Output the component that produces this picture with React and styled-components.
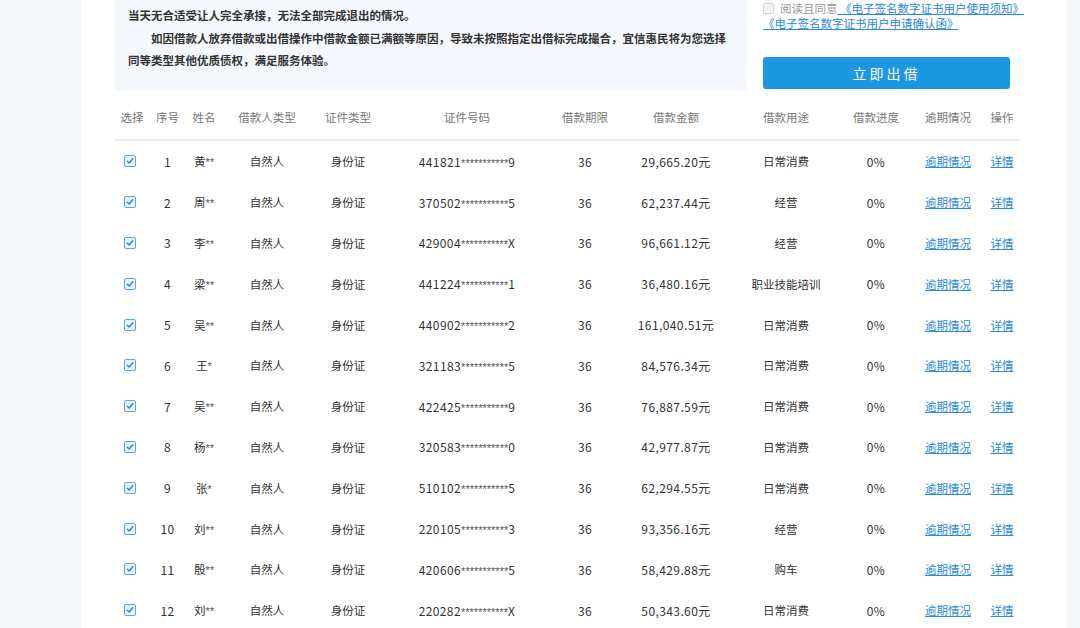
import React from "react";
import styled, { createGlobalStyle } from "styled-components";

const GlobalStyle = createGlobalStyle`
  html, body { margin: 0; padding: 0; }
  body {
    background: #f5f7fb;
    font-family: "Noto Sans CJK SC", "Microsoft YaHei", sans-serif;
    color: #333;
    overflow: hidden;
  }
`;

const Page = styled.div`
  display: flex;
  padding: 0 18px 0 81px;
  height: 628px;
  overflow: hidden;
`;

const Panel = styled.div`
  flex: 1;
  background: #fff;
  padding: 0 42px 0 33px;
`;

const Top = styled.div`
  display: flex;
  align-items: flex-start;
`;

const Notice = styled.div`
  width: 633px;
  box-sizing: border-box;
  background: #f5f8fc;
  padding: 4px 19px 20px 14px;
  height: 91px;
  font-size: 11.5px;
  line-height: 22.5px;
  font-weight: 700;
  color: #333;
`;

const Para = styled.p`
  margin: 0;
  text-indent: ${(p) => (p.$indent ? "2em" : "0")};
`;

const Side = styled.div`
  flex: 1;
  padding-left: 16px;
  display: flex;
  flex-direction: column;
`;

const Agree = styled.div`
  font-size: 11.5px;
  line-height: 15px;
  padding-top: 0.5px;
  color: #999;
  white-space: nowrap;
`;

const SmallBox = styled.span`
  display: inline-block;
  width: 9px;
  height: 9px;
  border: 1px solid #cfd3d8;
  background: #f3f4f6;
  border-radius: 2px;
  vertical-align: -1px;
  margin-right: 6px;
`;

const Link = styled.a`
  color: #2a8ad8;
  text-decoration: underline;
  cursor: pointer;
`;

const Button = styled.button`
  margin-top: 26px;
  width: 247px;
  height: 32px;
  border: none;
  border-radius: 3px;
  background: #1c98e3;
  color: #fff;
  font-family: inherit;
  font-size: 14px;
  letter-spacing: 3px;
  padding-left: 6px;
  cursor: pointer;
`;

const cols = "36px 35px 38px 88px 74px 164px 72px 110px 110px 70px 74px 34px";

const Table = styled.div`
  width: 906px;
  margin-top: 4px;
`;

const HeadRow = styled.div`
  display: grid;
  grid-template-columns: ${cols};
  height: 44px;
  align-items: center;
  border-bottom: 2px solid #e6edf6;
  font-size: 11.5px;
  color: #777;
`;

const Row = styled.div`
  display: grid;
  grid-template-columns: ${cols};
  height: 40.8px;
  align-items: center;
  font-size: 11.5px;
  color: #333;
`;

const Cell = styled.div`
  text-align: center;
  white-space: nowrap;
  font-size: ${(p) => (p.$num ? "12px" : "inherit")};
  letter-spacing: ${(p) => (p.$num ? "0.4px" : "normal")};
`;

const CheckCell = styled.div`
  display: flex;
  justify-content: center;
  padding-right: 5px;
`;

const Check = styled.span`
  display: inline-flex;
  align-items: center;
  justify-content: center;
  width: 10px;
  height: 10px;
  border: 1px solid #5ba7e4;
  border-radius: 2px;
  background: #eaf4fd;
`;

const Stars = styled.span`
  font-family: "Liberation Sans", Arial, sans-serif;
  font-size: 11px;
  letter-spacing: 0;
  color: #555;
`;

const heads = ["选择", "序号", "姓名", "借款人类型", "证件类型", "证件号码", "借款期限", "借款金额", "借款用途", "借款进度", "逾期情况", "操作"];

const rows = [
  ["黄**", "441821", "9", "29,665.20元", "日常消费"],
  ["周**", "370502", "5", "62,237.44元", "经营"],
  ["李**", "429004", "X", "96,661.12元", "经营"],
  ["梁**", "441224", "1", "36,480.16元", "职业技能培训"],
  ["吴**", "440902", "2", "161,040.51元", "日常消费"],
  ["王*", "321183", "5", "84,576.34元", "日常消费"],
  ["吴**", "422425", "9", "76,887.59元", "日常消费"],
  ["杨**", "320583", "0", "42,977.87元", "日常消费"],
  ["张*", "510102", "5", "62,294.55元", "日常消费"],
  ["刘**", "220105", "3", "93,356.16元", "经营"],
  ["殷**", "420606", "5", "58,429.88元", "购车"],
  ["刘**", "220282", "X", "50,343.60元", "日常消费"],
];

function Name({ v }) {
  const surname = v.replace(/\*/g, "");
  const stars = v.slice(surname.length);
  return (
    <>
      {surname}
      <Stars>{stars}</Stars>
    </>
  );
}

export default function App() {
  return (
    <>
      <GlobalStyle />
      <Page>
        <Panel>
          <Top>
            <Notice>
              <Para>当天无合适受让人完全承接，无法全部完成退出的情况。</Para>
              <Para $indent>
                如因借款人放弃借款或出借操作中借款金额已满额等原因，导致未按照指定出借标完成撮合，宜信惠民将为您选择同等类型其他优质债权，满足服务体验。
              </Para>
            </Notice>
            <Side>
              <Agree>
                <SmallBox />
                阅读且同意
                <Link> 《电子签名数字证书用户使用须知》</Link>
                <br />
                <Link>《电子签名数字证书用户申请确认函》</Link>
              </Agree>
              <Button>立即出借</Button>
            </Side>
          </Top>
          <Table>
            <HeadRow>
              {heads.map((h) => (
                <Cell key={h}>{h}</Cell>
              ))}
            </HeadRow>
            {rows.map((r, i) => (
              <Row key={i}>
                <CheckCell>
                  <Check>
                    <svg width="8" height="8" viewBox="0 0 8 8">
                      <path d="M1.3 4.2 L3.2 6 L6.8 1.8" fill="none" stroke="#2a86d6" strokeWidth="1.5" strokeLinecap="round" strokeLinejoin="round" />
                    </svg>
                  </Check>
                </CheckCell>
                <Cell $num>{i + 1}</Cell>
                <Cell>
                  <Name v={r[0]} />
                </Cell>
                <Cell>自然人</Cell>
                <Cell>身份证</Cell>
                <Cell $num>
                  {r[1]}
                  <Stars>***********</Stars>
                  {r[2]}
                </Cell>
                <Cell $num>36</Cell>
                <Cell $num>{r[3]}</Cell>
                <Cell>{r[4]}</Cell>
                <Cell $num>0%</Cell>
                <Cell>
                  <Link>逾期情况</Link>
                </Cell>
                <Cell>
                  <Link>详情</Link>
                </Cell>
              </Row>
            ))}
          </Table>
        </Panel>
      </Page>
    </>
  );
}
